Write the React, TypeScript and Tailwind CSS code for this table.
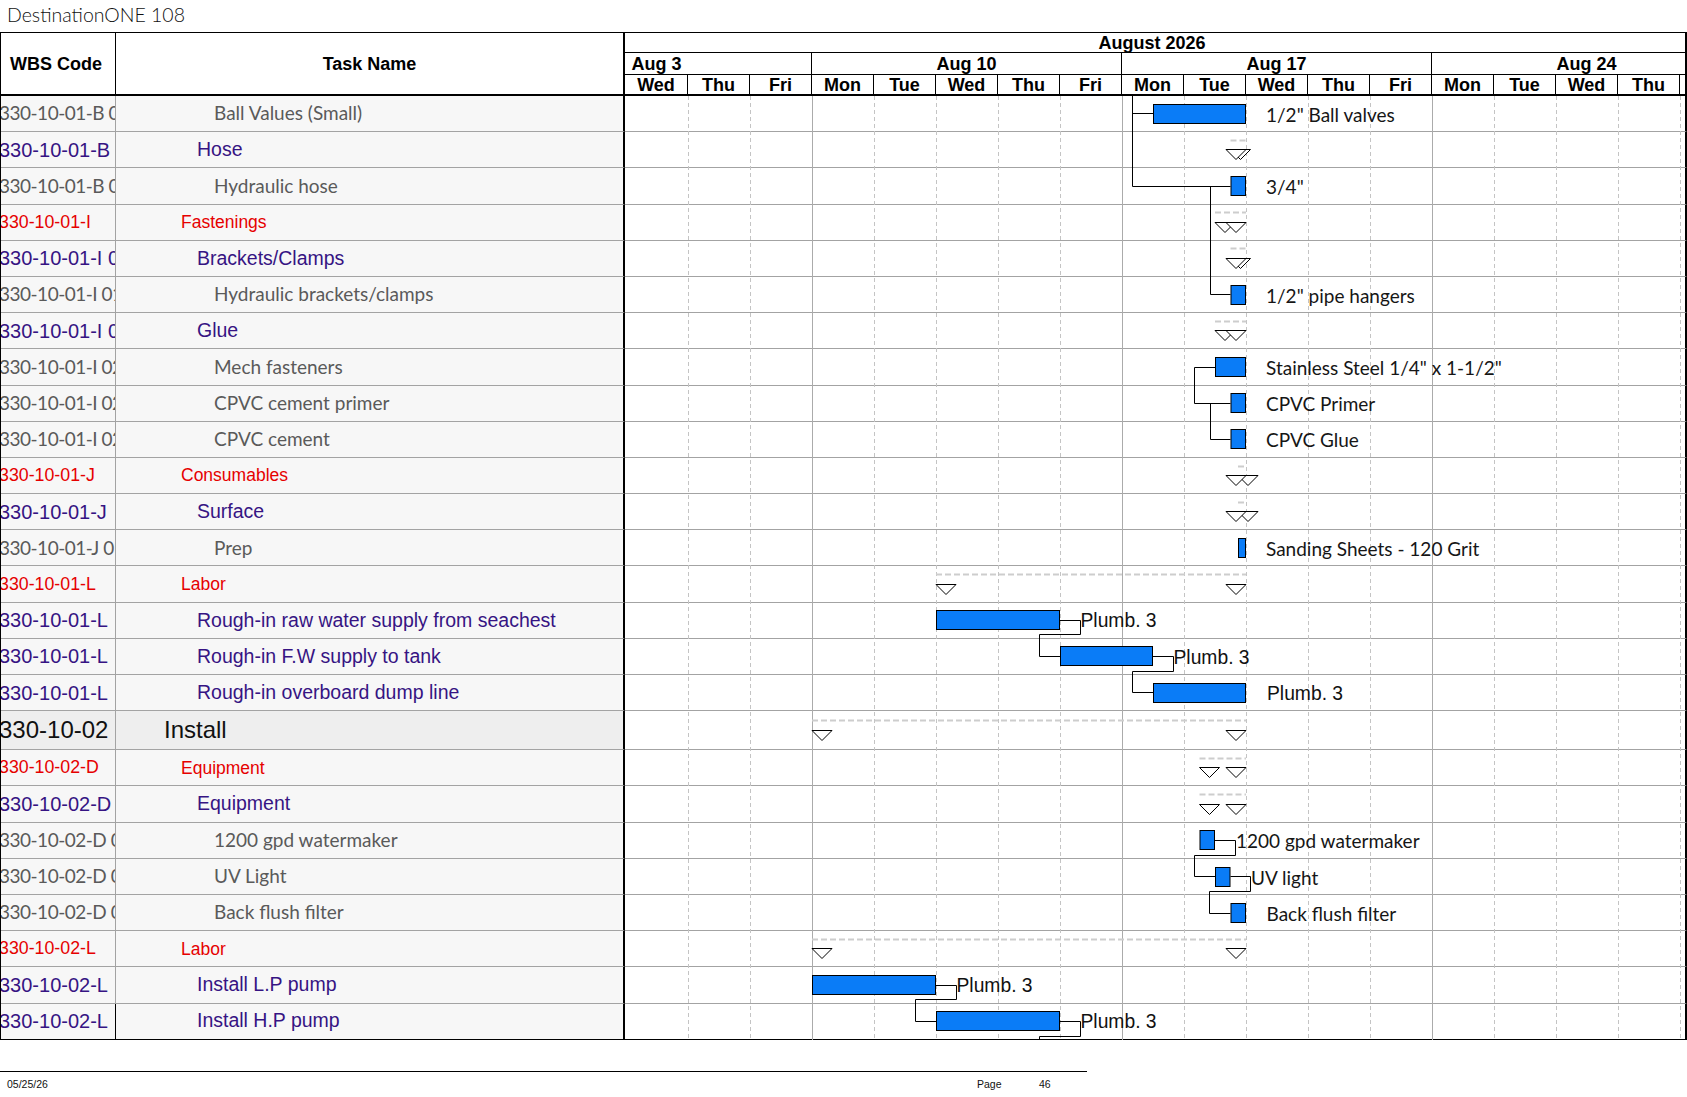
import React from "react";

const ROW_H = 36.2;
const INSTALL_H = 39;
const GANTT_W = 1060;

type Kind = "detail" | "group" | "phase" | "install";

const rows: { wbs: string; name: string; kind: Kind }[] = [
  { wbs: "330-10-01-B 01-01", name: "Ball Values (Small)", kind: "detail" },
  { wbs: "330-10-01-B", name: "Hose", kind: "group" },
  { wbs: "330-10-01-B 02-01", name: "Hydraulic hose", kind: "detail" },
  { wbs: "330-10-01-I", name: "Fastenings", kind: "phase" },
  { wbs: "330-10-01-I 01", name: "Brackets/Clamps", kind: "group" },
  { wbs: "330-10-01-I 01-01", name: "Hydraulic brackets/clamps", kind: "detail" },
  { wbs: "330-10-01-I 02", name: "Glue", kind: "group" },
  { wbs: "330-10-01-I 02-01", name: "Mech fasteners", kind: "detail" },
  { wbs: "330-10-01-I 02-02", name: "CPVC cement primer", kind: "detail" },
  { wbs: "330-10-01-I 02-03", name: "CPVC cement", kind: "detail" },
  { wbs: "330-10-01-J", name: "Consumables", kind: "phase" },
  { wbs: "330-10-01-J", name: "Surface", kind: "group" },
  { wbs: "330-10-01-J 01-01", name: "Prep", kind: "detail" },
  { wbs: "330-10-01-L", name: "Labor", kind: "phase" },
  { wbs: "330-10-01-L", name: "Rough-in raw water supply from seachest", kind: "group" },
  { wbs: "330-10-01-L", name: "Rough-in F.W supply to tank", kind: "group" },
  { wbs: "330-10-01-L", name: "Rough-in overboard dump line", kind: "group" },
  { wbs: "330-10-02", name: "Install", kind: "install" },
  { wbs: "330-10-02-D", name: "Equipment", kind: "phase" },
  { wbs: "330-10-02-D", name: "Equipment", kind: "group" },
  { wbs: "330-10-02-D 01-01", name: "1200 gpd watermaker", kind: "detail" },
  { wbs: "330-10-02-D 01-02", name: "UV Light", kind: "detail" },
  { wbs: "330-10-02-D 01-03", name: "Back flush filter", kind: "detail" },
  { wbs: "330-10-02-L", name: "Labor", kind: "phase" },
  { wbs: "330-10-02-L", name: "Install L.P pump", kind: "group" },
  { wbs: "330-10-02-L", name: "Install H.P pump", kind: "group" },
];

const textStyle: Record<Kind, string> = {
  detail: "font-['Lato',sans-serif] text-[19px] text-[#5a5a5a]",
  group: "font-['Liberation_Sans',Arial,sans-serif] text-[19.5px] text-[#361483]",
  phase: "font-['Liberation_Sans',Arial,sans-serif] text-[17.5px] text-[#e60000]",
  install: "font-['Liberation_Sans',Arial,sans-serif] text-[24px] text-[#111111]",
};

const wbsStyle: Record<Kind, string> = {
  detail: "font-['Lato',sans-serif] text-[19px] tracking-[-0.5px] text-[#5a5a5a]",
  group: "font-['Liberation_Sans',Arial,sans-serif] text-[20px] text-[#361483]",
  phase: "font-['Liberation_Sans',Arial,sans-serif] text-[17.8px] text-[#e60000]",
  install: "font-['Liberation_Sans',Arial,sans-serif] text-[24px] text-[#111111]",
};

const indent: Record<Kind, string> = {
  detail: "pl-[98px]",
  group: "pl-[81px]",
  phase: "pl-[65px]",
  install: "pl-[48px]",
};

const tops: number[] = [];
const heights: number[] = [];
let acc = 0;
rows.forEach((r) => {
  const h = r.kind === "install" ? INSTALL_H : ROW_H;
  tops.push(acc);
  heights.push(h);
  acc += h;
});
const BODY_H = acc;

const px = (v: number) => Math.floor(v) + 0.5;
const cy = (i: number) => px(tops[i] + 17.8);
const low = (i: number) => px(tops[i] + heights[i] - 4);

const bars = [
  { r: 0, s: 527, e: 620, label: '1/2" Ball valves', lx: 640, arial: false },
  { r: 2, s: 604.5, e: 620, label: '3/4"', lx: 640, arial: false },
  { r: 5, s: 604.5, e: 620, label: '1/2" pipe hangers', lx: 640, arial: false },
  { r: 7, s: 589, e: 620, label: 'Stainless Steel 1/4" x 1-1/2"', lx: 640, arial: false },
  { r: 8, s: 604.5, e: 620, label: "CPVC Primer", lx: 640, arial: false },
  { r: 9, s: 604.5, e: 620, label: "CPVC Glue", lx: 640, arial: false },
  { r: 12, s: 612, e: 620, label: "Sanding Sheets - 120 Grit", lx: 640, arial: false },
  { r: 14, s: 310, e: 434, label: "Plumb. 3", lx: 454.5, arial: true },
  { r: 15, s: 434, e: 527, label: "Plumb. 3", lx: 547.5, arial: true },
  { r: 16, s: 527, e: 620, label: "Plumb. 3", lx: 641, arial: true },
  { r: 20, s: 573.5, e: 589, label: "1200 gpd watermaker", lx: 610, arial: false },
  { r: 21, s: 589, e: 604.5, label: "UV light", lx: 625, arial: false },
  { r: 22, s: 604.5, e: 620, label: "Back flush filter", lx: 640.5, arial: false },
  { r: 24, s: 186, e: 310, label: "Plumb. 3", lx: 330.5, arial: true },
  { r: 25, s: 310, e: 434, label: "Plumb. 3", lx: 454.5, arial: true },
];

const summaries = [
  { r: 1, s: 604.5, e: 620 },
  { r: 3, s: 589, e: 620 },
  { r: 4, s: 604.5, e: 620 },
  { r: 6, s: 589, e: 620 },
  { r: 10, s: 612, e: 620 },
  { r: 11, s: 612, e: 620 },
  { r: 13, s: 310, e: 620 },
  { r: 17, s: 186, e: 620 },
  { r: 18, s: 573.5, e: 620 },
  { r: 19, s: 573.5, e: 620 },
  { r: 23, s: 186, e: 620 },
];

// finish-to-start link: out of the bar end, down, back left, into the next bar
function fs(from: number, end: number, to: number, start: number): string {
  const x1 = px(end + 20);
  const x2 = px(start - 21);
  return `M${end} ${cy(from)} H${x1} V${low(from)} H${x2} V${cy(to)} H${start}`;
}

const links = [
  `M${px(506)} 0 V${cy(2)} H604.5`,
  `M${px(506)} ${cy(0)} H527`,
  `M${px(584)} ${cy(2)} V${cy(5)} H604.5`,
  `M589 ${cy(7)} H${px(568)} V${cy(8)} H604.5`,
  `M${px(584)} ${cy(8)} V${cy(9)} H604.5`,
  fs(14, 434, 15, 434),
  fs(15, 527, 16, 527),
  fs(20, 589, 21, 589),
  fs(21, 604.5, 22, 604.5),
  fs(24, 310, 25, 310),
  `M434 ${cy(25)} H${px(454.5)} V${low(25)} H${px(413)} V${BODY_H}`,
];

const weeks = ["Aug 3", "Aug 10", "Aug 17", "Aug 24"];
const days = ["Wed", "Thu", "Fri", "Mon", "Tue", "Wed", "Thu", "Fri", "Mon", "Tue", "Wed", "Thu", "Fri", "Mon", "Tue", "Wed", "Thu", "Fri"];

function GanttChart() {
  const gridLines = [];
  for (let k = 1; k <= 17; k++) {
    const x = 62 * k + 0.5;
    const solid = k === 3 || k === 8 || k === 13;
    gridLines.push(
      <line
        key={k}
        x1={x}
        x2={x}
        y1={0}
        y2={BODY_H}
        stroke={solid ? "#ababab" : "#c4c4c4"}
        strokeWidth={1}
        strokeDasharray={solid ? undefined : "4 3"}
      />
    );
  }

  return (
    <svg
      className="absolute left-[625px] top-0"
      width={GANTT_W}
      height={BODY_H}
      viewBox={`0 0 ${GANTT_W} ${BODY_H}`}
    >
      {gridLines}

      {summaries.map((m) => {
        const c = tops[m.r] + heights[m.r] / 2;
        const ly = px(c - 10);
        const ty = px(c - 0.6);
        return (
          <g key={`s${m.r}`}>
            <line x1={m.s} x2={m.e} y1={ly} y2={ly} stroke="#cdcdcd" strokeWidth={2} strokeDasharray="6 3" />
            <polygon
              points={`${m.s},${ty} ${m.s + 20},${ty} ${m.s + 10},${ty + 10}`}
              fill="white"
              stroke="black"
              strokeWidth={1}
            />
            <polygon
              points={`${m.e - 20},${ty} ${m.e},${ty} ${m.e - 10},${ty + 10}`}
              fill="white"
              stroke="black"
              strokeWidth={1}
            />
          </g>
        );
      })}

      {links.map((d, i) => (
        <path key={`l${i}`} d={d} fill="none" stroke="black" strokeWidth={1} />
      ))}

      {bars.map((b) => (
        <g key={`b${b.r}`}>
          <rect
            x={b.s + 0.5}
            y={Math.floor(tops[b.r] + 8) + 0.5}
            width={b.e - b.s - 1}
            height={19}
            fill="#0a7cf7"
            stroke="black"
            strokeWidth={1}
          />
          <text
            x={b.lx}
            y={tops[b.r] + 18}
            dominantBaseline="central"
            className={
              b.arial
                ? "font-['Liberation_Sans',Arial,sans-serif] text-[19.3px] fill-[#111111]"
                : "font-['Lato',sans-serif] text-[19px] fill-[#161616]"
            }
          >
            {b.label}
          </text>
        </g>
      ))}
    </svg>
  );
}

export default function App() {
  return (
    <div className="w-[1687px] h-[1097px] overflow-hidden bg-white text-black">
      <div className="h-[32px] pl-[7px] pt-[4px] font-['Lato',sans-serif] font-light text-[19.5px] leading-[22px] text-[#111111]">
        DestinationONE 108
      </div>

      {/* header */}
      <div className="flex h-[64px] border-t border-b-2 border-l border-black font-['Liberation_Sans',Arial,sans-serif] font-bold text-[18px] leading-none">
        <div className="w-[115px] shrink-0 border-r border-black flex items-center pl-[9px]">WBS Code</div>
        <div className="w-[509px] shrink-0 border-r-2 border-black flex items-center justify-center">Task Name</div>
        <div className="w-[1062px] shrink-0 border-r-2 border-black flex flex-col overflow-hidden">
          <div className="h-[20px] shrink-0 border-b border-black flex">
            <div className="ml-[-124px] w-[1302px] shrink-0 flex items-center justify-center">August 2026</div>
          </div>
          <div className="h-[22px] shrink-0 border-b border-black flex">
            <div className="ml-[-124px] flex shrink-0">
              {weeks.map((w) => (
                <div key={w} className="w-[310px] shrink-0 border-l border-black flex items-center justify-center">
                  {w}
                </div>
              ))}
            </div>
          </div>
          <div className="flex-1 flex">
            {days.map((d, i) => (
              <div
                key={i}
                className={`w-[62px] shrink-0 flex items-center justify-center ${i === 0 ? "" : "border-l border-black"}`}
              >
                {d}
              </div>
            ))}
          </div>
        </div>
      </div>

      {/* body */}
      <div className="relative border-l border-black">
        {rows.map((r, i) => {
          const last = i === rows.length - 1;
          const line = last ? "border-b border-black" : "border-b border-[#a3a3a3]";
          const bg = r.kind === "install" ? "bg-[#eeeeee]" : "bg-[#f7f7f7]";
          return (
            <div
              key={i}
              className={`flex ${r.kind === "install" ? "h-[39px]" : "h-[36.2px]"}`}
            >
              <div
                className={`w-[115px] shrink-0 overflow-hidden whitespace-nowrap flex items-center border-r border-[#8c8c8c] ${line} ${bg} ${wbsStyle[r.kind]}`}
              >
                <span className="ml-[-2px]">{r.wbs}</span>
              </div>
              <div
                className={`w-[509px] shrink-0 overflow-hidden whitespace-nowrap flex items-center border-r-2 border-r-black ${line} ${bg} ${indent[r.kind]} ${textStyle[r.kind]}`}
              >
                {r.name}
              </div>
              <div className={`w-[1062px] shrink-0 bg-white border-r-2 border-r-black ${line}`} />
            </div>
          );
        })}
        <GanttChart />
      </div>

      {/* footer */}
      <div className="mt-[31px] w-[1087px] border-t border-black" />
      <div className="flex pt-[6px] font-['Liberation_Sans',Arial,sans-serif] text-[10.5px] leading-[12px] text-[#111111]">
        <span className="w-[977px] shrink-0 pl-[7px]">05/25/26</span>
        <span className="w-[62px] shrink-0">Page</span>
        <span>46</span>
      </div>
    </div>
  );
}
